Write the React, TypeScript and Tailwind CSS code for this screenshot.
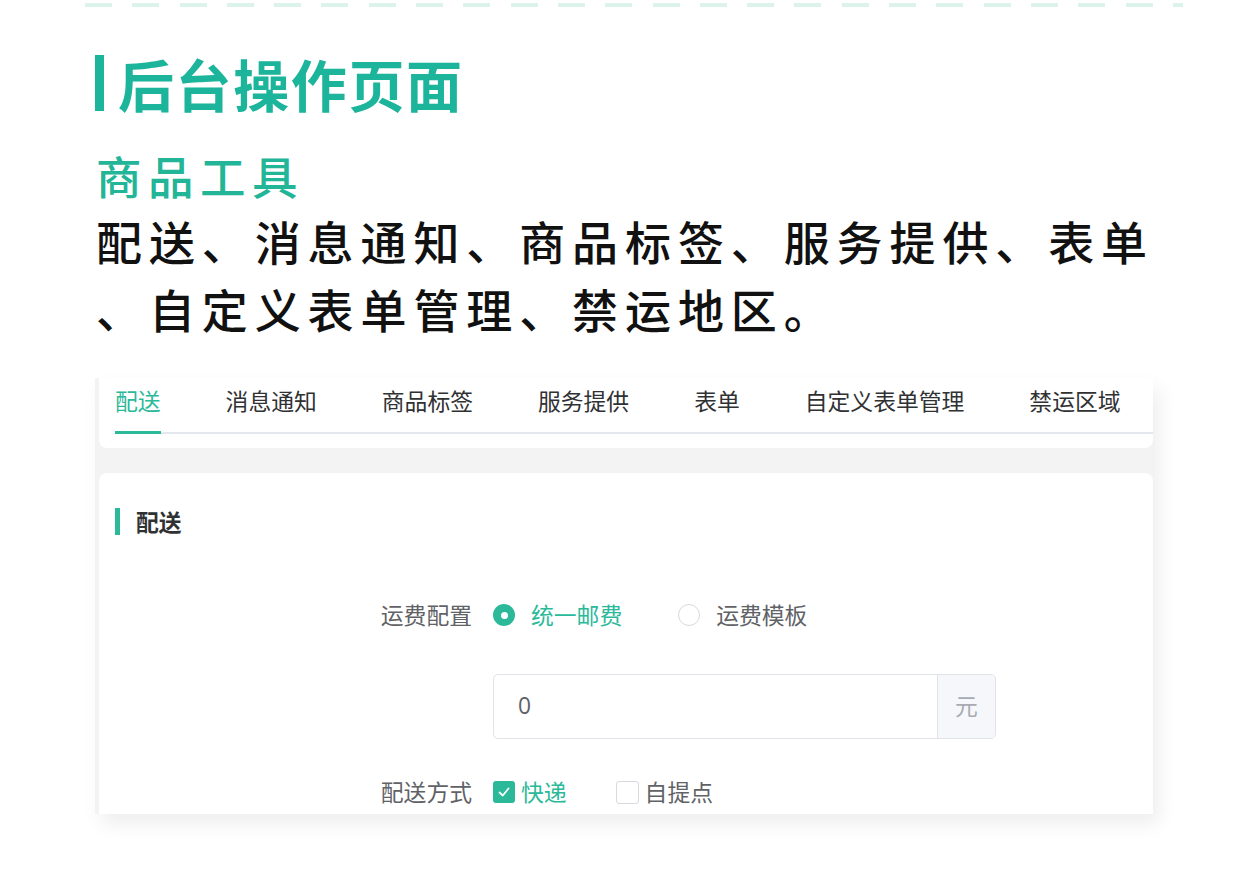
import React from "react";

const FONT = { fontFamily: '"Noto Sans CJK SC", "Noto Sans", sans-serif' };

const tabs = ["配送", "消息通知", "商品标签", "服务提供", "表单", "自定义表单管理", "禁运区域"];

export default function App() {
  return (
    <div className="w-[1242px] h-[870px] bg-white overflow-hidden flex flex-col" style={FONT}>
      {/* dashed top line */}
      <div className="ml-[85px] mt-[3px] h-[4px] w-[1098px] bg-[repeating-linear-gradient(90deg,#dbf3ea_0px,#dbf3ea_27px,transparent_27px,transparent_47.3px)]" />

      {/* title */}
      <div className="ml-[95px] mt-[48px] flex items-center">
        <div className="w-[9px] h-[56px] bg-[#1cb59b]" />
        <div className="ml-[14px] text-[56px] leading-[56px] font-bold tracking-[1.6px] text-[#1cb59b]">后台操作页面</div>
      </div>

      {/* subtitle */}
      <div className="ml-[96px] mt-[38px] text-[45.5px] leading-[52px] font-medium tracking-[6.5px] text-[#22b597]">商品工具</div>

      {/* body text */}
      <div className="ml-[96px] mt-[5px] text-[46px] leading-[68px] font-medium tracking-[6.9px] text-[#111111]">
        配送、消息通知、商品标签、服务提供、表单
        <br />
        、自定义表单管理、禁运地区。
      </div>

      {/* embedded screenshot panel */}
      <div className="ml-[95px] mt-[auto] mb-[56px] w-[1058px] h-[436px] bg-[#f3f3f4] pl-[4px] flex flex-col shadow-[6px_10px_18px_rgba(0,0,0,0.07)]">
        {/* tabs card */}
        <div className="h-[70px] bg-white rounded-b-[8px] pl-[16px]">
          <div className="flex gap-[65px] border-b-2 border-[#e4e7ed]">
            {tabs.map((t, i) => (
              <div
                key={t}
                className={
                  i === 0
                    ? "h-[56px] -mb-[2px] pt-[11px] text-[22.8px] leading-[24px] text-[#2bb99a] border-b-[3px] border-[#2bb99a]"
                    : "h-[56px] -mb-[2px] pt-[11px] text-[22.8px] leading-[24px] text-[#303133]"
                }
              >
                {t}
              </div>
            ))}
          </div>
        </div>

        {/* content card */}
        <div className="mt-[25px] flex-1 bg-white rounded-t-[8px] overflow-hidden">
          <div className="mt-[35px] ml-[16px] flex items-center">
            <div className="w-[5px] h-[27px] bg-[#2bb99a]" />
            <div className="ml-[16px] text-[22.8px] leading-[27px] font-bold text-[#303133]">配送</div>
          </div>

          <div className="pl-[253px] flex flex-col">
            {/* row 1 */}
            <div className="mt-[60px] h-[40px] flex items-center">
              <div className="w-[120px] text-right text-[22.8px] text-[#606266]">运费配置</div>
              <div className="ml-[21px] flex items-center">
                <div className="w-[22px] h-[22px] rounded-full bg-[#2bb99a] flex items-center justify-center">
                  <div className="w-[7px] h-[7px] rounded-full bg-white" />
                </div>
                <div className="ml-[16px] text-[22.8px] text-[#2bb99a]">统一邮费</div>
                <div className="ml-[56px] w-[22px] h-[22px] rounded-full border-[1.5px] border-[#d6d9e0] bg-white" />
                <div className="ml-[16px] text-[22.8px] text-[#606266]">运费模板</div>
              </div>
            </div>

            {/* row 2 */}
            <div className="mt-[39px] flex">
              <div className="w-[120px]" />
              <div className="ml-[21px] w-[503px] h-[65px] rounded-[5px] border-[1.5px] border-[#e1e3e9] flex overflow-hidden">
                <div className="flex-1 flex items-center pl-[24px] text-[22.8px] text-[#606266]" style={{ fontFamily: '"Open Sans", "Noto Sans", sans-serif' }}>0</div>
                <div className="w-[58px] bg-[#f5f7fa] border-l-[1.5px] border-[#e1e3e9] flex items-center justify-center text-[22.8px] text-[#a8abb2]">元</div>
              </div>
            </div>

            {/* row 3 */}
            <div className="mt-[33px] h-[40px] flex items-center">
              <div className="w-[120px] text-right text-[22.8px] text-[#606266]">配送方式</div>
              <div className="ml-[21px] flex items-center">
                <div className="w-[22px] h-[22px] rounded-[3px] bg-[#2bb99a] flex items-center justify-center">
                  <svg width="14" height="14" viewBox="0 0 14 14" fill="none">
                    <polyline points="2.5,7.5 5.8,10.5 11.5,3.5" stroke="white" strokeWidth="1.8" strokeLinecap="round" strokeLinejoin="round" />
                  </svg>
                </div>
                <div className="ml-[6px] text-[22.8px] text-[#2bb99a]">快递</div>
                <div className="ml-[49px] w-[23px] h-[23px] rounded-[3px] border-[1.5px] border-[#d6d9e0] bg-white" />
                <div className="ml-[6px] text-[22.8px] text-[#606266]">自提点</div>
              </div>
            </div>
          </div>
        </div>
      </div>
    </div>
  );
}
